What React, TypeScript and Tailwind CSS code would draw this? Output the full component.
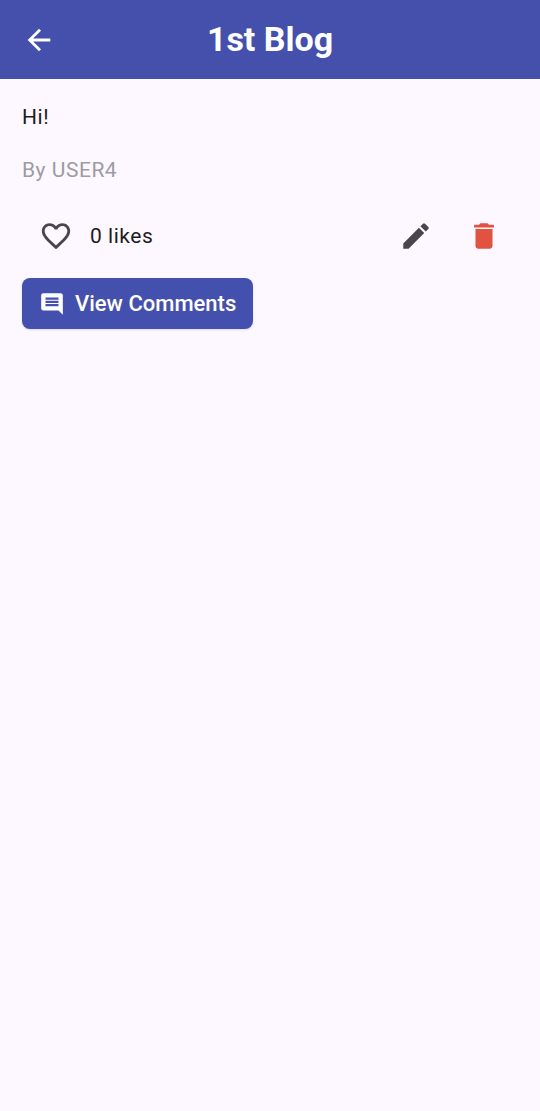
import { MdArrowBack, MdComment, MdDelete, MdEdit, MdFavoriteBorder } from "react-icons/md";

export default function App() {
  return (
    <div className="min-h-screen bg-[#fdf8ff] font-['Roboto',sans-serif] text-[#1d1b20]">
      <header className="grid h-[79px] grid-cols-[1fr_auto_1fr] items-center bg-[#4550ac] px-[15px] text-white">
        <button type="button" aria-label="Back" className="flex size-12 items-center justify-center">
          <MdArrowBack size={34} />
        </button>
        <h1 className="pb-[2px] text-[34px] leading-10 font-bold">1st Blog</h1>
      </header>
      <main className="flex flex-col items-start px-[22px] pt-[22px] text-[21px] leading-8 tracking-wide">
        <p>Hi!</p>
        <p className="mt-[21px] text-[#9e9ba1]">By USER4</p>
        <div className="mt-4 flex w-full items-center">
          <button type="button" aria-label="Like" className="flex size-[68px] items-center justify-center text-[#49454f]">
            <MdFavoriteBorder size={34} />
          </button>
          <span>0 likes</span>
          <button type="button" aria-label="Edit" className="ml-auto flex size-[68px] items-center justify-center text-[#49454f]">
            <MdEdit size={34} />
          </button>
          <button type="button" aria-label="Delete" className="flex size-[68px] items-center justify-center text-[#e25241]">
            <MdDelete size={34} />
          </button>
        </div>
        <button type="button" className="mt-2 flex h-[51px] items-center gap-[10px] rounded-lg bg-[#4450ad] px-[17px] text-[22px] font-medium tracking-normal text-white shadow">
          <MdComment size={26} />
          View Comments
        </button>
      </main>
    </div>
  );
}
